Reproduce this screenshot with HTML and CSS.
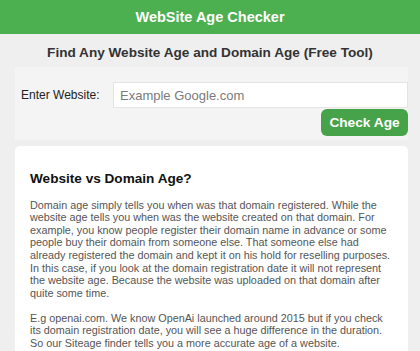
FILE: index.html
```html
<!DOCTYPE html>
<html>
<head>
<meta charset="utf-8">
<link rel="stylesheet" href="styles.css">
</head>
<body>
<header class="topbar">WebSite Age Checker</header>
<h2 class="subtitle">Find Any Website Age and Domain Age (Free Tool)</h2>
<div class="form-panel">
  <div class="form-row">
    <label class="label">Enter Website:</label>
    <input class="url-input" type="text" placeholder="Example Google.com">
  </div>
  <div class="btn-row">
    <button class="check-btn">Check Age</button>
  </div>
</div>
<div class="card">
  <h3 class="card-title">Website vs Domain Age?</h3>
  <p class="card-text">Domain age simply tells you when was that domain registered. While the website age tells you when was the website created on that domain. For example, you know people register their domain name in advance or some people buy their domain from someone else. That someone else had already registered the domain and kept it on his hold for reselling purposes. In this case, if you look at the domain registration date it will not represent the website age. Because the website was uploaded on that domain after quite some time.</p>
  <p class="card-text">E.g openai.com. We know OpenAi launched around 2015 but if you check its domain registration date, you will see a huge difference in the duration. So our Siteage finder tells you a more accurate age of a website.</p>
</div>
</body>
</html>
```
FILE: styles.css
```css
html, body {
  margin: 0;
  padding: 0;
  background: #efefef;
  font-family: "Liberation Sans", Arial, sans-serif;
  overflow: hidden;
}
.topbar {
  height: 34px;
  line-height: 34px;
  background: #4caf50;
  color: #fff;
  font-weight: bold;
  font-size: 14.5px;
  text-align: center;
}
.subtitle {
  margin: 11px 0 0;
  height: 22px;
  line-height: 16px;
  font-size: 13.6px;
  font-weight: bold;
  color: #333;
  text-align: center;
}
.form-panel {
  margin: 0 12px 0 15px;
  padding: 15px 0 4px 6px;
  background: #f4f4f4;
}
.form-row {
  display: flex;
  align-items: center;
  gap: 13px;
}
.label {
  font-size: 12px;
  color: #222;
  white-space: nowrap;
  width: 79px;
}
.url-input {
  flex: 1;
  min-width: 0;
  height: 26px;
  box-sizing: border-box;
  border: 1px solid #e4e4e4;
  background: #fff;
  padding: 0 6px;
  font-family: "Liberation Sans", Arial, sans-serif;
  font-size: 13px;
  margin: 0;
  outline: none;
}
.url-input::placeholder {
  color: #7a7a7a;
}
.btn-row {
  display: flex;
  justify-content: flex-end;
  margin-top: 1px;
}
.check-btn {
  width: 87px;
  height: 27px;
  border: none;
  border-radius: 6px;
  background: #46a34a;
  color: #fff;
  font-family: "Liberation Sans", Arial, sans-serif;
  font-weight: bold;
  font-size: 13.7px;
  padding: 0;
}
.card {
  margin: 6px 12px 0 15px;
  background: #fff;
  border-radius: 5px;
  padding: 25px 15px 15px;
}
.card-title {
  margin: 0 0 12px;
  font-size: 13.6px;
  color: #111;
  line-height: 15.6px;
}
.card-text {
  margin: 0 0 12.5px;
  font-size: 10.8px;
  line-height: 12.6px;
  color: #555;
}
```
